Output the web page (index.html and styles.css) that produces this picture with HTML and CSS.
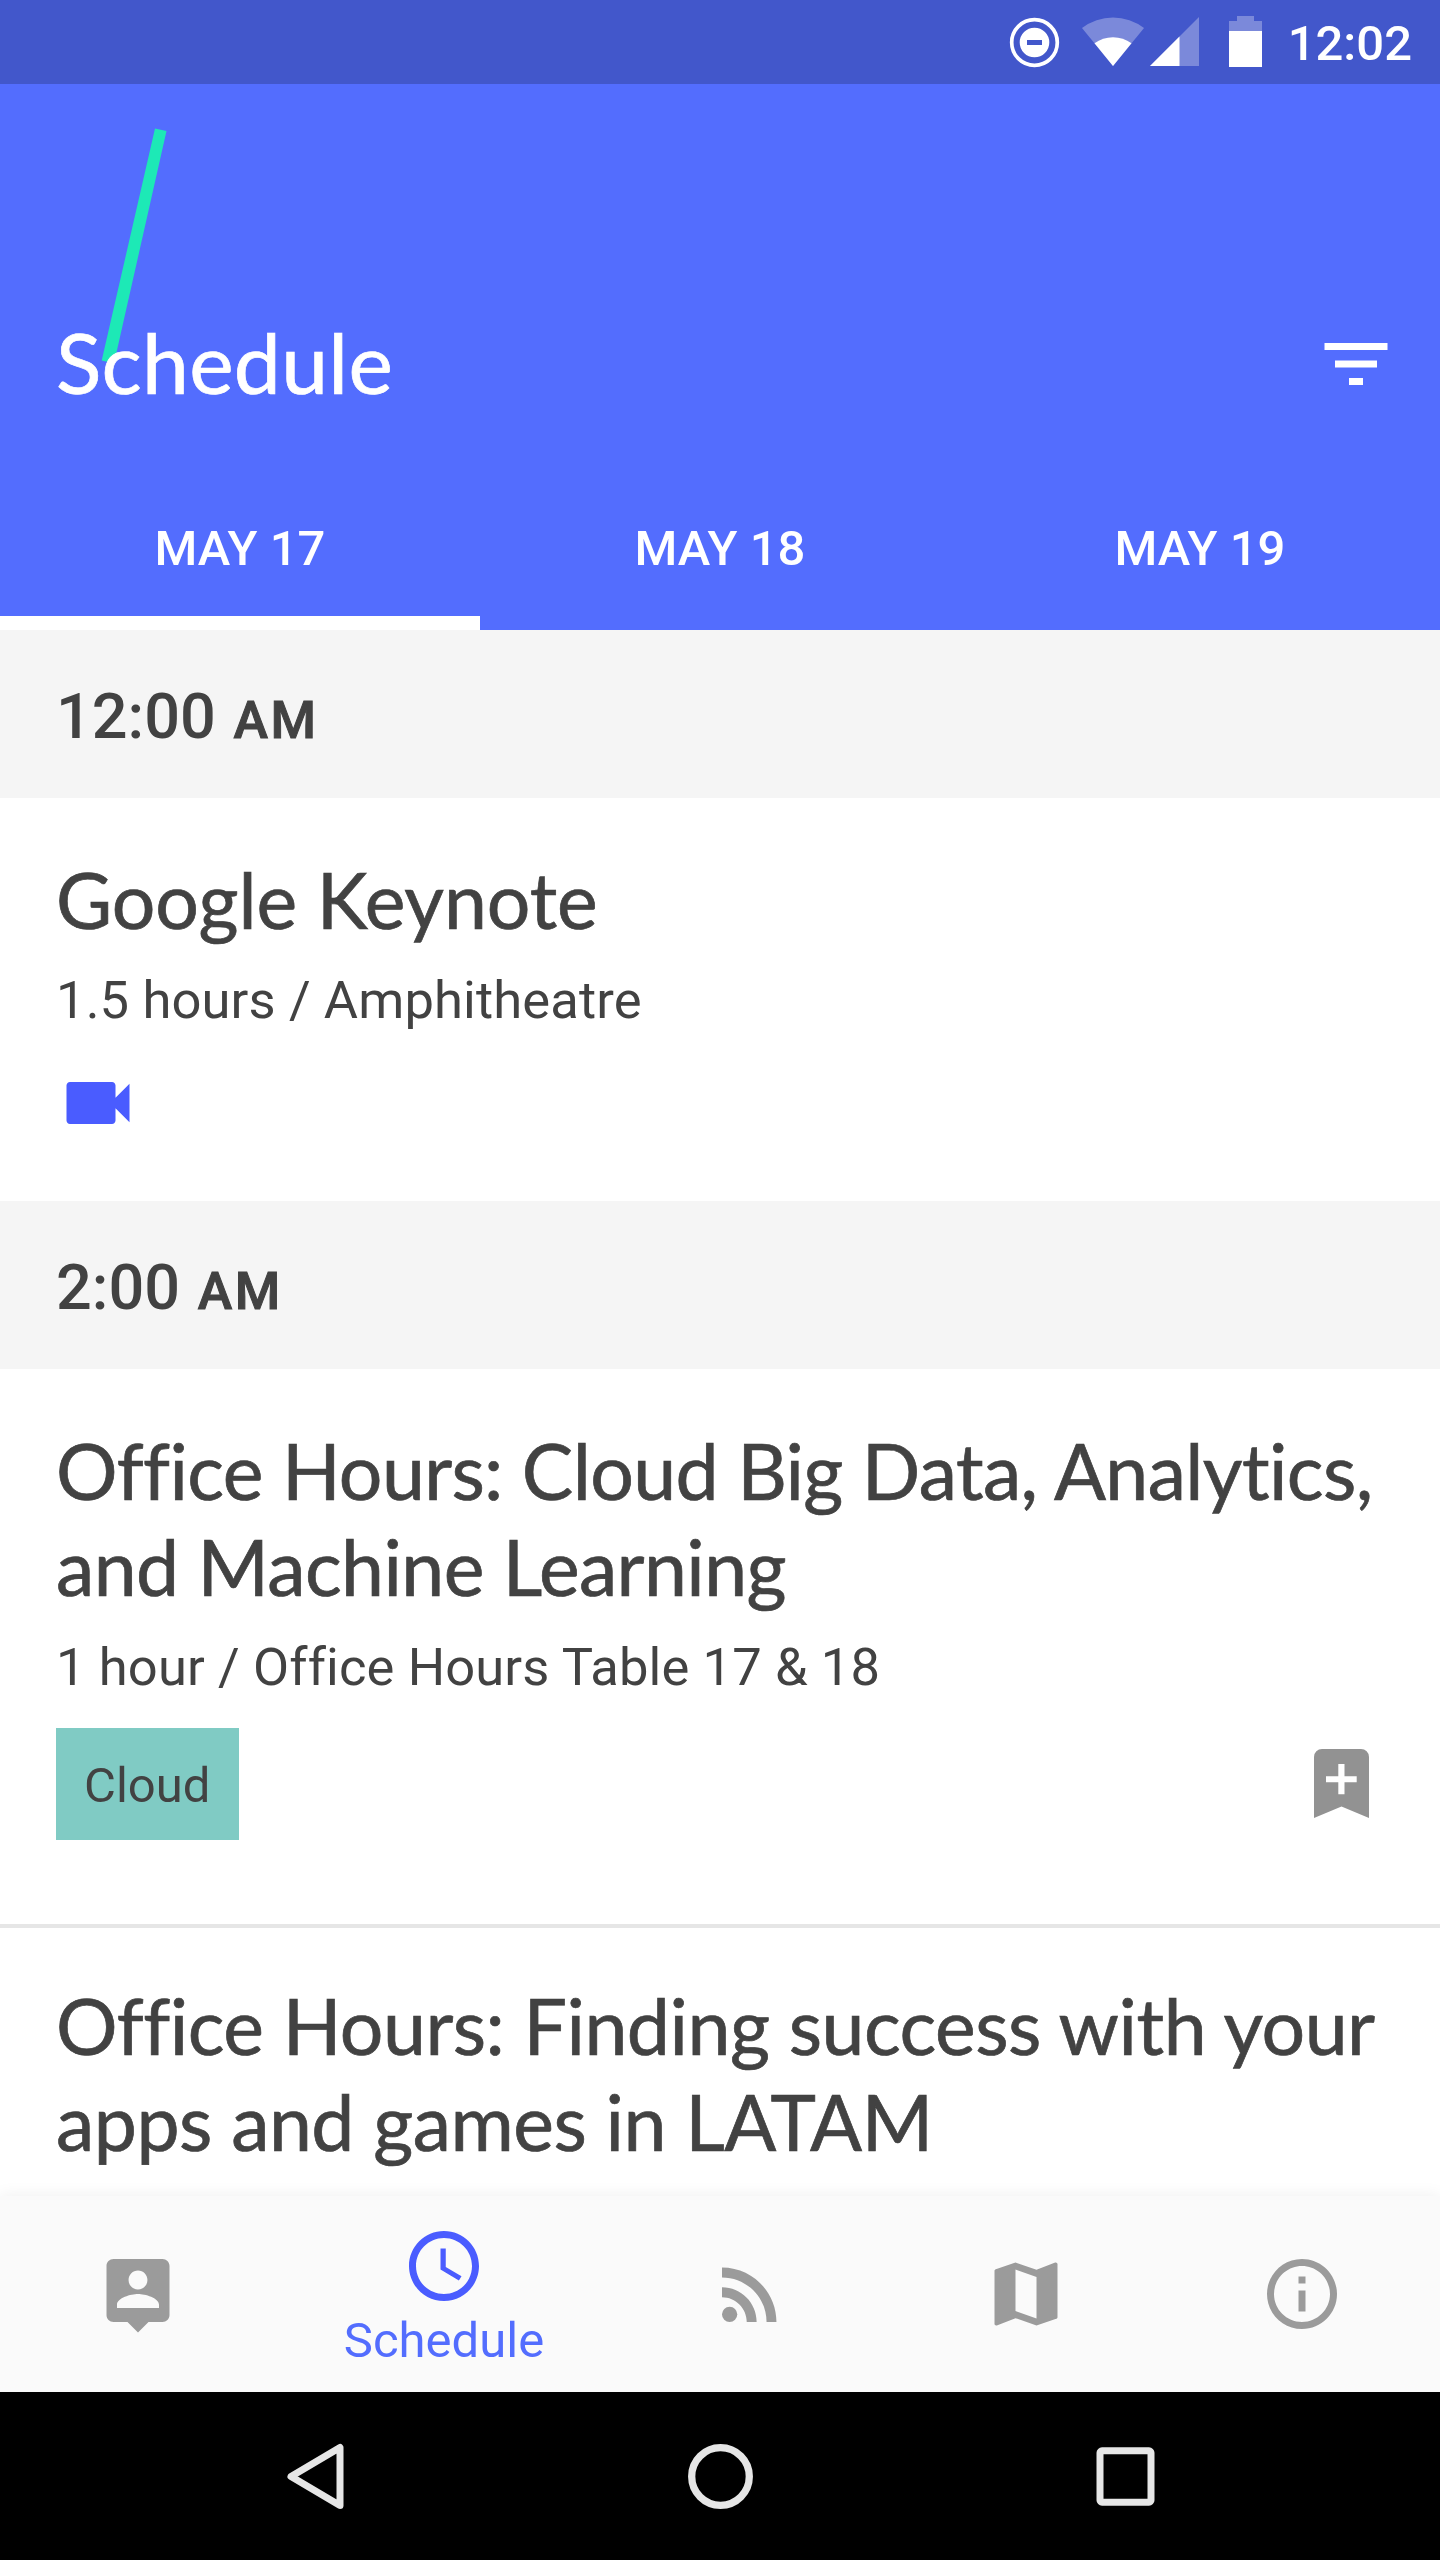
FILE: index.html
```html
<!DOCTYPE html>
<html lang="en">
<head>
<meta charset="utf-8">
<title>Schedule</title>
<link rel="stylesheet" href="styles.css">
</head>
<body>
<div class="screen">
  <div class="status-bar">
    <svg class="status-icons" width="254" height="84" viewBox="0 0 254 84" fill="#fff" aria-hidden="true">
      <circle cx="25.5" cy="42.5" r="22.8" fill="none" stroke="#fff" stroke-width="3.7"/>
      <path fill-rule="evenodd" d="M25.5 27.7a14.8 14.8 0 1 0 0 29.6a14.8 14.8 0 1 0 0-29.6zM18 40h15v5H18z"/>
      <path fill-opacity=".3" d="M73 28A51 51 0 0 1 135 28L104 66z"/>
      <path d="M85.500 43.300A31 31 0 0 1 122.500 43.300L104 66z"/>
      <path fill-opacity=".3" d="M141 66L190 17V66z"/>
      <path d="M141 66L170.500 36.500V66z"/>
      <path fill-opacity=".3" d="M228 16h17v5h8v10h-33V21h8z"/>
      <path d="M220 31h33v36h-33z"/>
    </svg>
    <span class="clock">12:02</span>
  </div>

  <header class="app-bar">
    <svg class="slash" width="70" height="240" viewBox="0 0 70 240" aria-hidden="true"><path fill="#1de9b6" d="M55 4.500L66.500 7L14 239.500L1.700 236.500z"/></svg>
    <div class="title-row">
      <h1>Schedule</h1>
      <svg class="filter" width="84" height="84" viewBox="0 0 24 24" fill="#fff" aria-hidden="true"><path d="M10 18h4v-2h-4v2zM3 6v2h18V6H3zm3 7h12v-2H6v2z"/></svg>
    </div>
    <nav class="tabs">
      <a class="tab active">MAY 17</a>
      <a class="tab">MAY 18</a>
      <a class="tab">MAY 19</a>
    </nav>
  </header>

  <main class="sessions">
    <h2 class="time">12:00 <span class="period">AM</span></h2>
    <article class="session">
      <h3 class="name loose">Google Keynote</h3>
      <p class="detail">1.5 hours / Amphitheatre</p>
      <div class="meta">
        <svg width="84" height="84" viewBox="0 0 24 24" fill="#4a5cff" aria-hidden="true"><path d="M17 10.500V7c0-.55-.45-1-1-1H4c-.55 0-1 .45-1 1v10c0 .55.45 1 1 1h12c.55 0 1-.45 1-1v-3.500l4 4v-11l-4 4z"/></svg>
      </div>
    </article>

    <h2 class="time">2:00 <span class="period">AM</span></h2>
    <article class="session tagged">
      <h3 class="name tight">Office Hours: Cloud Big Data, Analytics,<br>and Machine Learning</h3>
      <p class="detail">1 hour / Office Hours Table 17 &amp; 18</p>
      <div class="meta">
        <span class="tag">Cloud</span>
        <svg class="bookmark" width="55" height="69" viewBox="0 0 55 69" fill="#929292" aria-hidden="true"><path fill-rule="evenodd" d="M8 0H47a8 8 0 0 1 8 8V69L27.500 57.500L0 69V8a8 8 0 0 1 8-8zM24.300 15V27.300H12V33.300H24.300V45.300H30.500V33.300H42.700V27.300H30.500V15z"/></svg>
      </div>
    </article>
    <article class="session divided">
      <h3 class="name">Office Hours: Finding success with your<br>apps and games in LATAM</h3>
    </article>
  </main>

  <nav class="bottom-nav">
    <a class="nav-item"><svg width="84" height="84" viewBox="0 0 24 24" aria-hidden="true"><path d="M19 2H5c-1.110 0-2 .9-2 2v14c0 1.100.89 2 2 2h4l3 3 3-3h4c1.100 0 2-.9 2-2V4c0-1.100-.9-2-2-2zm-7 3.300c1.490 0 2.700 1.210 2.700 2.700s-1.210 2.700-2.700 2.700S9.300 9.490 9.300 8s1.210-2.700 2.700-2.700zM18 16H6v-.9c0-2 4-3.100 6-3.100s6 1.100 6 3.100v.9z"/></svg></a>
    <a class="nav-item active"><svg width="84" height="84" viewBox="0 0 24 24" aria-hidden="true"><path d="M11.990 2C6.470 2 2 6.480 2 12s4.470 10 9.990 10C17.520 22 22 17.520 22 12S17.520 2 11.990 2zM12 20c-4.420 0-8-3.580-8-8s3.580-8 8-8 8 3.580 8 8-3.580 8-8 8zM12.500 7H11v6l5.250 3.150.75-1.230-4.500-2.670z"/></svg><span>Schedule</span></a>
    <a class="nav-item"><svg width="84" height="84" viewBox="0 0 24 24" aria-hidden="true"><circle cx="6.180" cy="17.820" r="2.180"/><path d="M4 4.440v2.830c7.030 0 12.730 5.700 12.730 12.730h2.830c0-8.590-6.970-15.560-15.560-15.560zm0 5.660v2.830c3.900 0 7.070 3.170 7.070 7.070h2.830c0-5.470-4.430-9.900-9.900-9.900z"/></svg></a>
    <a class="nav-item"><svg width="84" height="84" viewBox="0 0 24 24" aria-hidden="true"><path d="M20.500 3l-.16.03L15 5.100 9 3 3.360 4.900c-.21.07-.36.25-.36.48V20.500c0 .28.22.5.5.5l.16-.03L9 18.900l6 2.100 5.640-1.900c.21-.07.36-.25.36-.48V3.500c0-.28-.22-.5-.5-.5zM15 19l-6-2.110V5l6 2.110V19z"/></svg></a>
    <a class="nav-item"><svg width="84" height="84" viewBox="0 0 24 24" aria-hidden="true"><path d="M11 17h2v-6h-2v6zm1-15C6.480 2 2 6.480 2 12s4.480 10 10 10 10-4.480 10-10S17.520 2 12 2zm0 18c-4.410 0-8-3.590-8-8s3.590-8 8-8 8 3.590 8 8-3.590 8-8 8zM11 9h2V7h-2v2z"/></svg></a>
  </nav>

  <div class="system-nav">
    <svg width="70" height="70" viewBox="0 0 70 70" aria-hidden="true"><path d="M60 6.500V64.500L11 35.500z" fill="none" stroke="#e6e6e6" stroke-width="7" stroke-linejoin="round"/></svg>
    <svg width="70" height="70" viewBox="0 0 70 70" aria-hidden="true"><circle cx="35.500" cy="35.500" r="28.800" fill="none" stroke="#e6e6e6" stroke-width="7.300"/></svg>
    <svg width="70" height="70" viewBox="0 0 70 70" aria-hidden="true"><rect x="10" y="9.800" width="51" height="51.400" rx="2" fill="none" stroke="#e6e6e6" stroke-width="7"/></svg>
  </div>
</div>
</body>
</html>
```
FILE: styles.css
```css
* {
  box-sizing: border-box;
}

body,
h1,
h2,
h3,
p {
  margin: 0;
}

.screen {
  display: flex;
  flex-direction: column;
  width: 1440px;
  height: 2560px;
  overflow: hidden;
  background: #fff;
  color: #424242;
  font-family: Roboto, sans-serif;
}

svg {
  display: block;
  flex: none;
}

/* Status bar */
.status-bar {
  display: flex;
  justify-content: flex-end;
  align-items: center;
  height: 84px;
  padding-right: 28px;
  background: #4257cb;
  color: #fff;
}

.status-icons {
  margin-right: 25px;
}

.clock {
  font-size: 49px;
  font-weight: 500;
  line-height: 58px;
  padding-top: 3px;
}

/* App bar */
.app-bar {
  position: relative;
  flex: none;
  height: 546px;
  background: #536dfe;
  color: #fff;
}

.slash {
  position: absolute;
  left: 100px;
  top: 40px;
}

.title-row {
  position: relative;
  display: flex;
  justify-content: space-between;
  align-items: center;
  height: 378px;
  padding: 228px 42px 50px 56px;
}

.filter {
  margin-top: 4px;
}

h1 {
  font: 400 84px/100px Lato, sans-serif;
  letter-spacing: 0.3px;
  -webkit-text-stroke: 0.7px currentColor;
}

.tabs {
  display: flex;
  height: 168px;
}

.tab {
  flex: 1;
  padding-top: 58px;
  border-bottom: 14px solid transparent;
  font-size: 49px;
  font-weight: 500;
  line-height: 58px;
  text-align: center;
}

.tab.active {
  border-bottom-color: #fff;
}

/* Session list */
.sessions {
  flex: 1;
  min-height: 0;
  overflow: hidden;
}

.time {
  height: 168px;
  padding: 50px 56px 0;
  background: #f5f5f5;
  font-size: 63px;
  font-weight: 500;
  line-height: 74px;
}

.period {
  margin-left: 2px;
  font-size: 52px;
  letter-spacing: 2.5px;
  -webkit-text-stroke: 1px currentColor;
}

.session {
  padding: 53px 56px 56px;
}

.session.tagged {
  padding-bottom: 84px;
}

.session.divided {
  padding-top: 49px;
  border-top: 4px solid #e6e6e6;
}

.name {
  font: 400 77px/96px Lato, sans-serif;
  letter-spacing: -0.5px;
  white-space: nowrap;
  -webkit-text-stroke: 0.7px currentColor;
}

.name.loose {
  letter-spacing: -0.1px;
}

.name.tight {
  letter-spacing: -0.62px;
}

.detail {
  margin-top: 22px;
  font-size: 52.5px;
  line-height: 62px;
  letter-spacing: 0.13px;
}

.meta {
  display: flex;
  justify-content: space-between;
  align-items: center;
  margin-top: 30px;
}

.tag {
  width: 183px;
  height: 112px;
  padding: 28px 0 0 28px;
  background: #80cbc4;
  font-size: 49px;
  line-height: 60px;
}

.bookmark {
  margin: 0 15px 1px 0;
}

/* Bottom navigation */
.bottom-nav {
  position: relative;
  display: flex;
  height: 196px;
  background: #fafafa;
  box-shadow: 0 0 16px rgba(0, 0, 0, 0.07);
}

.nav-item {
  display: flex;
  flex-direction: column;
  justify-content: center;
  align-items: center;
  width: 276px;
  fill: #9b9b9b;
}

.nav-item.active {
  justify-content: flex-start;
  width: 336px;
  padding-top: 28px;
  fill: #4a5cff;
  color: #536dfe;
  font-size: 49px;
  line-height: 58px;
}

.nav-item.active span {
  margin-top: 4px;
}

/* System navigation */
.system-nav {
  display: flex;
  justify-content: space-between;
  align-items: center;
  height: 168px;
  padding: 0 280px;
  background: #000;
}
```
